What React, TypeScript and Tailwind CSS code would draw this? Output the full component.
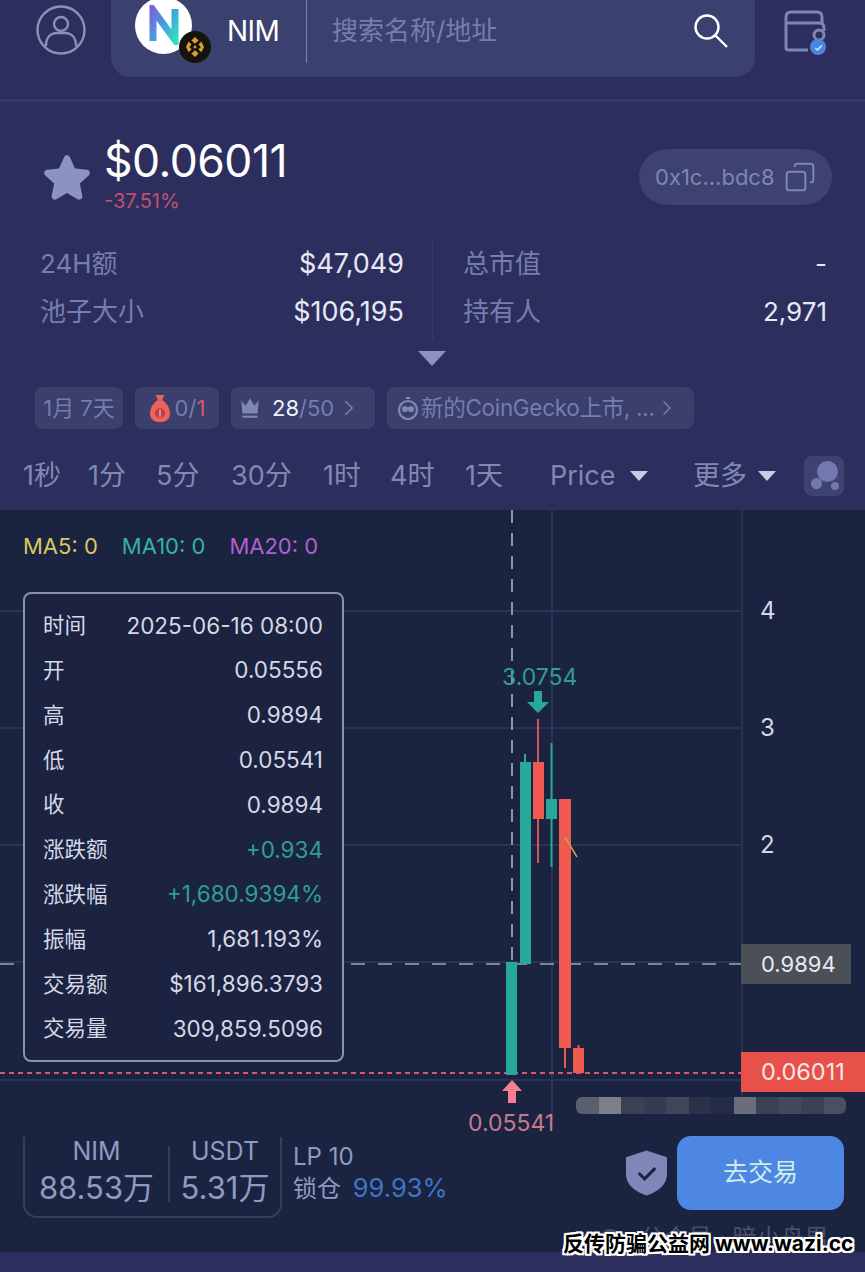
import {ChevronRight, Copy} from 'lucide-react';

const tooltipRows = [
  {label: '时间', value: '2025-06-16 08:00'},
  {label: '开', value: '0.05556'},
  {label: '高', value: '0.9894'},
  {label: '低', value: '0.05541'},
  {label: '收', value: '0.9894'},
  {label: '涨跌额', value: '+0.934', up: true},
  {label: '涨跌幅', value: '+1,680.9394%', up: true},
  {label: '振幅', value: '1,681.193%'},
  {label: '交易额', value: '$161,896.3793'},
  {label: '交易量', value: '309,859.5096'},
];

const timeframes = [
  {label: '1秒', className: 'w-[65px]'},
  {label: '1分', className: 'w-[68px]'},
  {label: '5分', className: 'w-[75px]'},
  {label: '30分', className: 'w-[92px]'},
  {label: '1时', className: 'w-[67px]'},
  {label: '4时', className: 'w-[75px]'},
  {label: '1天', className: 'w-[85px]'},
];

const blurBlocks = [
  'bg-[#5a5f6e]', 'bg-[#7b7f88]', 'bg-[#3c4256]', 'bg-[#343b52]', 'bg-[#3f455a]', 'bg-[#2a3149]',
  'bg-[#232b45]', 'bg-[#6a6e7a]', 'bg-[#3c4256]', 'bg-[#444a5e]', 'bg-[#3c4256]', 'bg-[#4a5064]',
];

function NimLogo() {
  return (
    <div className="relative w-[58px] h-[58px] -mt-[10px] shrink-0">
      <div className="w-[57px] h-[57px] rounded-full bg-white flex items-center justify-center">
        <svg viewBox="0 0 40 40" className="w-[40px] h-[40px]">
          <defs>
            <linearGradient id="nimGrad" x1="0" y1="0" x2="1" y2="1">
              <stop offset="0" stopColor="#7d63d8" />
              <stop offset="0.55" stopColor="#3fa6e0" />
              <stop offset="1" stopColor="#2fe0c0" />
            </linearGradient>
          </defs>
          <path d="M9 36V5l22 30V4" fill="none" stroke="url(#nimGrad)" strokeWidth="7" />
        </svg>
      </div>
      <div className="absolute left-[44px] top-[34px] w-[32px] h-[32px] rounded-full bg-[#15130d] flex items-center justify-center">
        <svg viewBox="0 0 24 24" className="w-[24px] h-[24px]" fill="#d9a02c">
          <path d="M12 2l3.600 3.400L12 8.800 8.400 5.400zM5.600 6.600l3 2.900-2.400 2.400 2.400 2.400-3 2.900-2.600-5.300zM18.400 6.600l2.600 5.300-2.600 5.300-3-2.900 2.400-2.400-2.400-2.400zM12 10.200l1.900 1.800L12 13.800 10.100 12zM12 15.200l3.600 3.400L12 22l-3.600-3.400z" />
        </svg>
      </div>
    </div>
  );
}

function WalletIcon() {
  return (
    <div className="relative w-[46px] h-[46px]">
      <svg viewBox="0 0 46 46" className="w-[46px] h-[46px]" fill="none" stroke="#7f86b3" strokeWidth="3">
        <path d="M3 14V8q0-5 5-5h26q5 0 5 5v6" />
        <path d="M3 14h33q5 0 5 5v3M3 14v25q0 2 3 2h19" />
        <circle cx="36" cy="26" r="5" />
      </svg>
      <div className="absolute left-[27px] top-[30px] w-[16px] h-[16px] rounded-full bg-[#4a86e0] flex items-center justify-center">
        <svg viewBox="0 0 12 12" className="w-[11px] h-[11px]" fill="none" stroke="#dbe8ff" strokeWidth="1.600">
          <path d="M2.500 6.500l2.400 2.300 4.600-5" />
        </svg>
      </div>
    </div>
  );
}

function Header() {
  return (
    <div className="h-[102px] border-b-[3px] border-[#363a68] flex pl-[36px] pr-[20px]">
      <svg viewBox="0 0 50 50" className="w-[50px] h-[50px] mt-[5px] shrink-0" fill="none" stroke="#8a90b8" strokeWidth="2.400">
        <circle cx="25" cy="25" r="23.500" />
        <circle cx="25" cy="19" r="7" />
        <path d="M10 41c0-9 5-13 11-13h8c6 0 11 4 11 13" />
      </svg>
      <div className="ml-[25px] w-[644px] h-[77px] rounded-b-[20px] bg-[#3b416f] flex items-center pl-[24px] pb-[16px]">
        <NimLogo />
        <span className="ml-[34px] text-[28px] text-white w-[79px] tracking-[-0.5px]">NIM</span>
        <div className="w-px h-[64px] bg-[#7d84ad]" />
        <span className="ml-[25px] text-[26px] text-[#767db0]">搜索名称/地址</span>
        <svg viewBox="0 0 34 34" className="ml-auto mr-[27px] w-[34px] h-[34px]" fill="none" stroke="#ffffff" strokeWidth="2.400">
          <circle cx="13" cy="13" r="11.500" />
          <path d="M21 21l12 12" />
        </svg>
      </div>
      <div className="ml-[28px] mt-[9px]">
        <WalletIcon />
      </div>
    </div>
  );
}

function PriceBlock() {
  return (
    <div className="flex items-center pl-[41px] pr-[33px] pt-[32px]">
      <svg viewBox="0 0 24 24" className="w-[52px] h-[52px] mt-[8px] shrink-0" fill="#8b92c4" stroke="#8b92c4" strokeWidth="3" strokeLinejoin="round">
        <path d="M12 3l2.700 6 6.300.7-4.700 4.300 1.300 6.500L12 17.200 6.400 20.500l1.300-6.500L3 9.700l6.300-.7z" />
      </svg>
      <div className="ml-[11px]">
        <div className="text-[44.500px] leading-[54px] text-white tracking-[-0.5px]">$0.06011</div>
        <div className="text-[20px] leading-[26px] text-[#c2506c]">-37.51%</div>
      </div>
      <div className="ml-auto mt-[6px] w-[193px] h-[56px] rounded-[28px] bg-[#3d4270] flex items-center pl-[16px] text-[#7f86b3] text-[22px]">
        0x1c...bdc8
        <Copy className="ml-[9px] w-[32px] h-[32px] -scale-x-100" strokeWidth={1.500} />
      </div>
    </div>
  );
}

function Stats() {
  return (
    <div className="relative mt-[26px] grid grid-cols-[392px_1fr] h-[100px] text-[26px] leading-[48px] pl-[40px] pr-[38px]">
      <div className="pr-[28px]">
        <div className="flex justify-between text-[#767db0]">
          <span>24H额</span>
          <span className="text-[27px] text-[#e6e8f4]">$47,049</span>
        </div>
        <div className="flex justify-between text-[#767db0]">
          <span>池子大小</span>
          <span className="text-[27px] text-[#e6e8f4]">$106,195</span>
        </div>
      </div>
      <div className="pl-[30px] border-l border-[#383c6b]">
        <div className="flex justify-between text-[#767db0]">
          <span>总市值</span>
          <span className="text-[#e6e8f4]">-</span>
        </div>
        <div className="flex justify-between text-[#767db0]">
          <span>持有人</span>
          <span className="text-[26px] text-[#e6e8f4]">2,971</span>
        </div>
      </div>
    </div>
  );
}

function Chips() {
  return (
    <div className="mt-[11px]">
      <div className="flex justify-center pr-[2px]">
        <div className="w-0 h-0 border-x-[14px] border-x-transparent border-t-[15px] border-t-[#8b92c4]" />
      </div>
      <div className="mt-[21px] flex gap-[12px] pl-[35px] h-[42px] text-[22px] text-[#767db0]">
        <div className="w-[88px] rounded-[8px] bg-[#3a3f6c] flex items-center justify-center whitespace-nowrap">1月 7天</div>
        <div className="w-[84px] rounded-[8px] bg-[#3a3f6c] flex items-center justify-center gap-[4px]">
          <svg viewBox="0 0 24 32" className="w-[22px] h-[29px]">
            <path d="M7 1h10l-3 6h-4z" fill="#f2605c" />
            <path d="M9 7h6c5 4 8 9 8 15 0 6-5 9-11 9S1 28 1 22c0-6 3-11 8-15z" fill="#f2605c" />
            <circle cx="12" cy="21" r="5.500" fill="#b8434e" />
            <path d="M12 17v8" stroke="#f2b0a8" strokeWidth="1.500" />
          </svg>
          <span>0/<span className="text-[#d4566f]">1</span></span>
        </div>
        <div className="w-[144px] rounded-[8px] bg-[#3a3f6c] flex items-center pl-[6px]">
          <svg viewBox="0 0 24 24" className="w-[26px] h-[26px]" fill="#8087b5">
            <path d="M4 5l4 5 4-7 4 7 4-5-1 12H5z" />
            <path d="M5 19h14v2H5z" />
          </svg>
          <span className="ml-[9px] text-[#eef0f8]">28</span>
          <span>/50</span>
          <ChevronRight className="ml-[2px] w-[26px] h-[30px]" strokeWidth={1.500} />
        </div>
        <div className="w-[307px] rounded-[8px] bg-[#3a3f6c] flex items-center pl-[9px] whitespace-nowrap">
          <svg viewBox="0 0 24 24" className="w-[24px] h-[24px]" fill="none" stroke="#8087b5" strokeWidth="2.200">
            <circle cx="12" cy="14" r="9" />
            <circle cx="9" cy="13" r="2" fill="#8087b5" />
            <circle cx="15" cy="13" r="2" fill="#8087b5" />
            <path d="M10 2h4" />
          </svg>
          <span className="ml-[1px] text-[22.500px] tracking-[-0.3px]">新的CoinGecko上市, ...</span>
          <ChevronRight className="w-[24px] h-[30px]" strokeWidth={1.500} />
        </div>
      </div>
    </div>
  );
}

function TimeframeBar() {
  return (
    <div className="mt-[19px] h-[56px] flex items-center pl-[23px] text-[27px] text-[#8288b4]">
      {timeframes.map((item) => (
        <span key={item.label} className={`${item.className} shrink-0`}>{item.label}</span>
      ))}
      <span className="w-[80px]">Price</span>
      <div className="w-0 h-0 border-x-[9px] border-x-transparent border-t-[10px] border-t-[#c7cbe4]" />
      <span className="ml-[45px] w-[65px] whitespace-nowrap">更多</span>
      <div className="w-0 h-0 border-x-[9px] border-x-transparent border-t-[10px] border-t-[#c7cbe4]" />
      <div className="relative ml-[28px] w-[40px] h-[40px] rounded-[8px] bg-[#3d4270]">
        <div className="absolute left-[13px] top-[5px] w-[21px] h-[21px] rounded-full bg-[#7379b0]" />
        <div className="absolute left-[7px] top-[22px] w-[11px] h-[11px] rounded-full bg-[#7379b0]" />
        <div className="absolute left-[27px] top-[26px] w-[8px] h-[8px] rounded-full bg-[#7379b0]" />
      </div>
    </div>
  );
}

// svg coordinates are page coordinates minus the chart's top of 510
function ChartDrawing() {
  return (
    <svg viewBox="0 0 865 640" className="absolute left-0 top-0 w-[865px] h-[640px]" fill="none">
      {[101, 218, 335, 452, 570].map((y) => (
        <path key={y} d={`M0 ${y}H742`} stroke="#2b3352" strokeWidth="2" />
      ))}
      <path d="M552 0V612M742 0V590" stroke="#2b3352" strokeWidth="2" />
      <path d="M512 0V565" stroke="#8d93a8" strokeWidth="2" strokeDasharray="13 10" />
      <path d="M0 454H745" stroke="#7d8398" strokeWidth="2" strokeDasharray="14 13" />
      <path d="M0 563H741" stroke="#d8566f" strokeWidth="2" strokeDasharray="5 4" />
      <path d="M741 454h10M741 563h10" stroke="#f0f0f0" strokeWidth="2" />
      <path d="M511.500 452V565" stroke="#26a999" strokeWidth="11" />
      <path d="M525 244V454" stroke="#26a999" strokeWidth="2" />
      <rect x="520" y="252" width="11" height="202" fill="#26a999" />
      <path d="M538 209V353" stroke="#d9525a" strokeWidth="2" />
      <rect x="533" y="252" width="11" height="57" fill="#ef5a50" />
      <path d="M551.500 233V357" stroke="#26a999" strokeWidth="2" />
      <rect x="546" y="289" width="11" height="20" fill="#26a999" />
      <path d="M565 538V558" stroke="#ef5a50" strokeWidth="2" />
      <rect x="559" y="289" width="12" height="249" fill="#ef5a50" />
      <path d="M578.500 535V563" stroke="#ef5a50" strokeWidth="2" />
      <rect x="573" y="538" width="11" height="25" fill="#ef5a50" />
      <path d="M565 327L577 347" stroke="#c9a23f" strokeWidth="1.500" />
      <path d="M534 181h8v11h7l-11 11-11-11h7z" fill="#26a999" />
      <path d="M512 570l10 11h-6v12h-8v-12h-6z" fill="#f77f92" />
    </svg>
  );
}

function TooltipCard() {
  return (
    <div className="absolute left-[23px] top-[82px] w-[321px] h-[470px] rounded-[8px] border-2 border-[#8a93ad] bg-[#1b2340] pl-[18px] pr-[19px] pt-[9px]">
      {tooltipRows.map((row) => (
        <div key={row.label} className="flex justify-between items-center h-[44.800px] text-[21.500px] text-[#d5d8e6] whitespace-nowrap">
          <span>{row.label}</span>
          <span className={`text-[22.500px] ${row.up ? 'text-[#2f9e92]' : ''}`}>{row.value}</span>
        </div>
      ))}
    </div>
  );
}

function Chart() {
  return (
    <div className="relative h-[620px]">
      <ChartDrawing />
      <div className="absolute left-[23px] top-[22px] flex gap-[24px] text-[22px] leading-[28px] whitespace-nowrap">
        <span className="text-[#d8c95f]">MA5: 0</span>
        <span className="text-[#35b39f]">MA10: 0</span>
        <span className="text-[#b45fd0]">MA20: 0</span>
      </div>
      <TooltipCard />
      <span className="absolute left-[502px] top-[153px] text-[23px] leading-[28px] text-[#2f9e92]">3.0754</span>
      <span className="absolute left-[468px] top-[599px] text-[23px] leading-[28px] text-[#c57a90]">0.05541</span>
      <span className="absolute left-[760px] top-[87px] text-[24px] leading-[28px] text-[#d5d8e6]">4</span>
      <span className="absolute left-[760px] top-[204px] text-[24px] leading-[28px] text-[#d5d8e6]">3</span>
      <span className="absolute left-[760px] top-[321px] text-[24px] leading-[28px] text-[#d5d8e6]">2</span>
      <div className="absolute left-[741px] top-[434px] w-[110px] h-[40px] bg-[#4a4f58] flex items-center pl-[20px] text-[22px] text-[#e8eaf0]">
        0.9894
      </div>
      <div className="absolute left-[741px] top-[542px] w-[124px] h-[40px] bg-[#e8504a] flex items-center pl-[20px] text-[23.500px] text-[#f6e6e4]">
        0.06011
      </div>
      <div className="absolute left-[576px] top-[587px] w-[270px] h-[17px] rounded-[6px] overflow-hidden flex">
        {blurBlocks.map((color, index) => (
          <div key={index} className={`flex-1 ${color}`} />
        ))}
      </div>
    </div>
  );
}

function BottomBar() {
  return (
    <div className="relative h-[122px] flex pl-[23px]">
      <div className="mt-[7px] w-[259px] h-[81px] rounded-b-[14px] border-x-2 border-b-2 border-[#363e5e] flex text-[#8f9ac0]">
        <div className="w-[143px] text-center">
          <div className="text-[25px] leading-[28px]">NIM</div>
          <div className="text-[31px] leading-[46px] whitespace-nowrap">88.53万</div>
        </div>
        <div className="w-[2px] h-[56px] mt-[9px] bg-[#363e5e]" />
        <div className="flex-1 text-center">
          <div className="text-[25px] leading-[28px]">USDT</div>
          <div className="text-[31px] leading-[46px] whitespace-nowrap">5.31万</div>
        </div>
      </div>
      <div className="ml-[11px] mt-[11px] text-[24px] leading-[31px] text-[#8f9ac0] whitespace-nowrap">
        <div>LP 10</div>
        <div>锁仓 <span className="ml-[5px] text-[25.500px] text-[#3f76c8]">99.93%</span></div>
      </div>
      <svg viewBox="0 0 44 48" className="absolute left-[625px] top-[19px] w-[43px] h-[48px]">
        <path d="M22 1l21 7v17c0 11-9 18-21 22C10 43 1 36 1 25V8z" fill="#7f86b8" />
        <path d="M14 24l6 6 11-11" fill="none" stroke="#1a2340" strokeWidth="3" />
      </svg>
      <div className="absolute left-[677px] top-[6px] w-[167px] h-[74px] rounded-[14px] bg-[#4e86e4] flex items-center justify-center text-[25px] text-[#cfeee8]">
        去交易
      </div>
      <div className="absolute left-[600px] top-[99px] w-[20px] h-[20px] rounded-full bg-[#4a5068]" />
      <span className="absolute left-[640px] top-[92px] text-[24px] leading-[32px] text-[#4a5068] whitespace-nowrap">公众号 · 暗小舟男</span>
    </div>
  );
}

export default function App() {
  return (
    <div
      className="relative w-[865px] h-[1272px] overflow-hidden bg-[#2c2f5e]"
      style={{fontFamily: 'Inter, "Noto Sans CJK SC", sans-serif'}}
    >
      <div className="h-[510px]">
        <Header />
        <PriceBlock />
        <Stats />
        <Chips />
        <TimeframeBar />
      </div>
      <div className="h-[742px] bg-[#1a2340]">
        <Chart />
        <BottomBar />
      </div>
      <span className="absolute left-[563px] top-[1228px] text-[21px] leading-[32px] font-bold text-black whitespace-nowrap [text-shadow:-2px_0_0_#fff,2px_0_0_#fff,0_-2px_0_#fff,0_2px_0_#fff,-2px_-2px_0_#fff,2px_2px_0_#fff,-2px_2px_0_#fff,2px_-2px_0_#fff]">
        反传防骗公益网 www.wazi.cc
      </span>
    </div>
  );
}
